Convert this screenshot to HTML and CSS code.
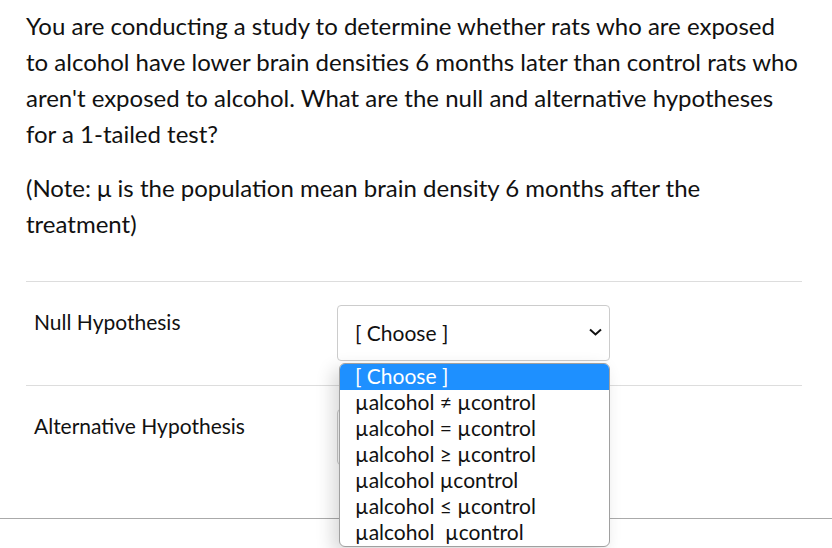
FILE: index.html
```html
<!DOCTYPE html>
<html lang="en">
<head>
    <meta charset="UTF-8">
    <title>Question</title>
    <link rel="stylesheet" href="styles.css">
</head>
<body>
    <div class="question">
        <div class="question-text">
            <p>You are conducting a study to determine whether rats who are exposed to alcohol have lower brain densities 6 months later than control rats who aren't exposed to alcohol. What are the null and alternative hypotheses for a 1-tailed test?</p>
            <p>(Note: &mu; is the population mean brain density 6 months after the treatment)</p>
        </div>

        <div class="answers">
            <div class="answer-row">
                <div class="answer-label">Null Hypothesis</div>
                <div class="select-wrap">
                    <div class="select">
                        <span>[ Choose ]</span>
                        <svg class="chevron" width="13" height="8" viewBox="0 0 13 8"><path d="M1 1.5 L6.5 6.5 L12 1.5" fill="none" stroke="#111" stroke-width="2"/></svg>
                    </div>
                    <!-- open option list -->
                    <ul class="dropdown">
                        <li class="selected">[ Choose ]</li>
                        <li>&micro;alcohol &ne; &micro;control</li>
                        <li>&micro;alcohol = &micro;control</li>
                        <li>&micro;alcohol &ge; &micro;control</li>
                        <li>&micro;alcohol &micro;control</li>
                        <li>&micro;alcohol &le; &micro;control</li>
                        <li>&micro;alcohol &nbsp;&micro;control</li>
                    </ul>
                </div>
            </div>
            <div class="answer-row">
                <div class="answer-label">Alternative Hypothesis</div>
                <div class="select-wrap">
                    <div class="select">
                        <span>[ Choose ]</span>
                        <svg class="chevron" width="13" height="8" viewBox="0 0 13 8"><path d="M1 1.5 L6.5 6.5 L12 1.5" fill="none" stroke="#111" stroke-width="2"/></svg>
                    </div>
                </div>
            </div>
        </div>
    </div>
    <div class="footer"></div>
</body>
</html>
```

FILE: styles.css
```css
* {
    margin: 0;
    padding: 0;
    box-sizing: border-box;
}

body {
    font-family: Lato, 'Liberation Sans', sans-serif;
    color: #111;
    background: #fff;
    width: 832px;
    height: 548px;
    overflow: hidden;
}

.question {
    padding: 8px 30px 0 26px;
}

.question-text {
    width: 772px;
    padding-bottom: 21px;
}

.question-text p {
    font-size: 24px;
    line-height: 36px;
    margin-bottom: 18px;
}

.answers {
    width: 776px;
}

.answer-row {
    display: flex;
    align-items: flex-start;
    border-top: 1px solid #ddd;
    padding: 23px 0 24px 0;
}

.answer-label {
    width: 311px;
    padding: 3px 0 0 8px;
    font-size: 21px;
    line-height: 27px;
}

.select-wrap {
    position: relative;
}

.select {
    width: 273px;
    height: 56px;
    border: 1px solid #ccc;
    border-radius: 4px;
    display: flex;
    align-items: center;
    justify-content: space-between;
    padding: 0 7px 2px 17px;
    font-size: 21px;
    background: #fff;
}

.dropdown {
    position: absolute;
    top: 58px;
    left: 2px;
    width: 271px;
    list-style: none;
    background: #fff;
    border: 1px solid #a0a0a0;
    border-radius: 6px;
    overflow: hidden;
    box-shadow: -6px 6px 18px rgba(0, 0, 0, 0.16);
    z-index: 10;
}

.dropdown li {
    height: 26px;
    line-height: 24px;
    padding-left: 15px;
    font-size: 21px;
    color: #111;
    white-space: pre;
}

.dropdown li.selected {
    background: #1e90ff;
    color: #fff;
}

.footer {
    border-top: 1px solid #aaa;
    margin-top: 29px;
}
```
